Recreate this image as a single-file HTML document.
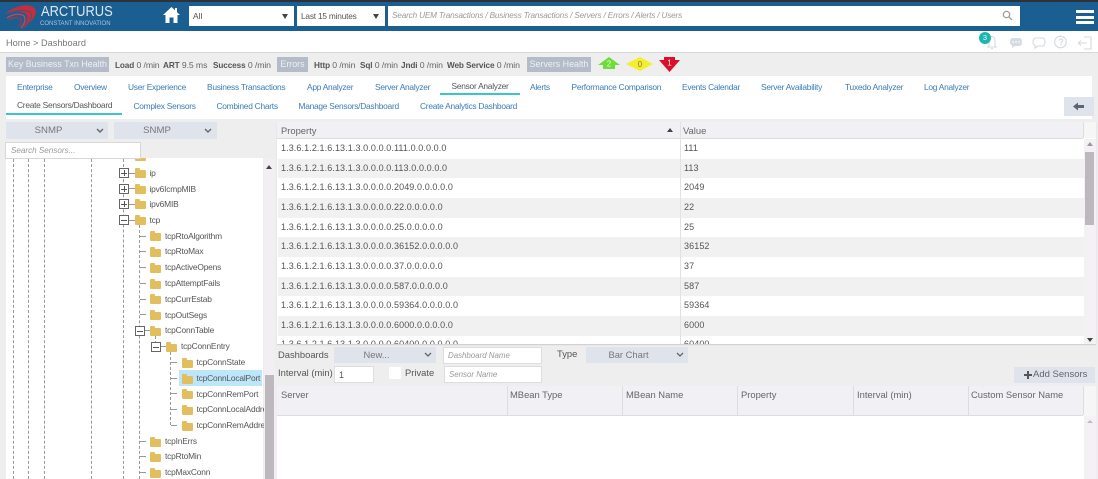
<!DOCTYPE html>
<html><head><meta charset="utf-8"><title>Dashboard</title>
<style>
html,body{margin:0;padding:0;background:#eee}
body{width:1098px;height:479px;overflow:hidden;position:relative;font-family:"Liberation Sans",sans-serif;font-size:9px;color:#666}
#w{position:absolute;left:0;top:0;width:1098px;height:479px;overflow:hidden;background:#eee;filter:blur(.3px)}
.a{position:absolute}
.t{position:absolute;white-space:nowrap;line-height:12px;height:12px}
.l{color:#3b7cb4;font-size:8.4px;letter-spacing:-.26px}
.d{color:#555;font-size:8.4px;letter-spacing:-.26px}
.h{font-size:8.7px;color:#666;letter-spacing:-.1px}
.h b{color:#555;font-size:8.2px}
.box{position:absolute;background:#b5bcc9;color:#eef0f3;font-size:8.9px;line-height:15px;height:15px;text-align:center;white-space:nowrap}
.sel{position:absolute;background:#dfe3ec;color:#777;font-size:9.6px;text-align:center;box-sizing:border-box;padding-right:17px}
.inp{position:absolute;background:#fff;border:1px solid #ddd;box-sizing:border-box;font-style:italic;color:#999;font-size:7.9px;white-space:nowrap}
.n{position:absolute;white-space:nowrap;font-size:8.4px;letter-spacing:-.18px;color:#555;line-height:12px}
.f{position:absolute;width:11px;height:8px;background:#e2bf5e;border-radius:1px}
.f:before{content:"";position:absolute;left:0;top:-2px;width:5px;height:3px;background:#e2bf5e;border-radius:1px 1px 0 0}
.b{position:absolute;width:8px;height:8px;border:1px solid #666;background:#fff}
.b:before{content:"";position:absolute;left:1px;top:3.5px;width:6px;height:1px;background:#555}
.p:after{content:"";position:absolute;left:3.5px;top:1px;width:1px;height:6px;background:#555}
.v{position:absolute;width:0;border-left:1px dashed #999}
.hl{position:absolute;height:0;width:6px;border-top:1px dashed #999}
.r{position:absolute;left:278px;width:806px;height:19.7px;line-height:19px;font-size:9px;letter-spacing:.1px;color:#555}
.r span{position:absolute;white-space:nowrap}
.r span:first-child{left:3px}
.r span:last-child{left:406px}
.g{background:#f1f1f1}
.c{position:absolute;white-space:nowrap;font-size:9.4px;color:#666;line-height:12px}
.s{position:absolute;width:1px;background:#dcdde2}
</style></head>
<body><div id="w">
<!-- header -->
<div class="a" style="left:0;top:0;width:1098px;height:2px;background:#2d3138"></div>
<div class="a" style="left:0;top:2px;width:1098px;height:29px;background:#1b5f92"></div>
<svg class="a" style="left:4px;top:4px" width="34" height="26" viewBox="0 0 34 26" fill="none">
<path d="M1 10C9 3 20 0 27 2C33 4 33 10 29 15C26 19 22 22 18 25C23 18 25 13 22 10C17 6 8 7 1 10Z" fill="#c92c3a"/>
<path d="M3 11C10 6 20 5 26 8C29 11 27 16 22 22" stroke="#1b5f92" stroke-width=".8"/>
<path d="M3 14C9 10 16 9 20 12C22 15 21 19 17 24" stroke="#d5424e" stroke-width="1.2"/>
<path d="M5 16C10 13 14 13 17 15C18 17 17 19 15 22" stroke="#b8303c" stroke-width="1.1"/>
</svg>
<div class="t" style="left:41px;top:4px;height:16px;line-height:16px;font-size:15.2px;color:#dfe8f0;transform:scaleX(.85);transform-origin:0 0">ARCTURUS</div>
<div class="t" style="left:40px;top:20px;height:8px;line-height:8px;font-size:6px;color:#a9c3d8">CONSTANT INNOVATION</div>
<svg class="a" style="left:162px;top:6px" width="19" height="18" viewBox="0 0 19 18"><path d="M9.5 1L1 9H3.5V17H7.5V11.5H11.5V17H15.5V9H18L15 6.2V2H13V4.3Z" fill="#fff"/></svg>
<div class="a" style="left:189px;top:6px;width:105px;height:20px;background:#fff"></div>
<div class="t" style="left:193px;top:10px;font-size:8.4px;color:#555">All</div>
<div class="a" style="left:282px;top:14px;width:0;height:0;border:3px solid transparent;border-top:5px solid #444;border-bottom:0"></div>
<div class="a" style="left:297px;top:6px;width:88px;height:20px;background:#fff"></div>
<div class="t" style="left:301px;top:10px;font-size:8.3px;letter-spacing:-.2px;color:#555">Last 15 minutes</div>
<div class="a" style="left:373px;top:14px;width:0;height:0;border:3px solid transparent;border-top:5px solid #444;border-bottom:0"></div>
<div class="a" style="left:388px;top:6px;width:632px;height:20px;background:#fff"></div>
<div class="t" style="left:392px;top:10px;font-size:8.2px;letter-spacing:-.16px;font-style:italic;color:#999">Search UEM Transactions / Business Transactions / Servers / Errors / Alerts / Users</div>
<svg class="a" style="left:1002px;top:10px" width="11" height="11" viewBox="0 0 11 11" fill="none" stroke="#999" stroke-width="1.2"><circle cx="4.5" cy="4.5" r="3.2"/><path d="M7 7L10 10"/></svg>
<div class="a" style="left:1076px;top:10px;width:18px;height:3px;background:#fff"></div>
<div class="a" style="left:1076px;top:16px;width:18px;height:3px;background:#fff"></div>
<div class="a" style="left:1076px;top:21px;width:18px;height:3px;background:#fff"></div>
<!-- breadcrumb -->
<div class="a" style="left:0;top:31px;width:1098px;height:21px;background:#fff;border-bottom:1px solid #d8d8d8"></div>
<div class="t" style="left:6px;top:37px;font-size:9.2px;color:#777">Home &gt; Dashboard</div>
<svg class="a" style="left:975px;top:30px" width="123" height="22" viewBox="0 0 123 22" fill="none" stroke="#d3dae0" stroke-width="1.1">
<path d="M12 17H22M14 17V11C14 8 15 6.500 17 6.500C19 6.500 20 8 20 11V17M16 18.500H18"/>
<path d="M38 8H44C46 8 47 9.500 47 12C47 14.500 46 16 44 16H40L37 18V15.500C36 15 35 14 35 12C35 9.500 36 8 38 8Z" fill="#d6dce2" stroke="none"/>
<circle cx="38" cy="12" r=".8" fill="#fff" stroke="none"/><circle cx="41" cy="12" r=".8" fill="#fff" stroke="none"/><circle cx="44" cy="12" r=".8" fill="#fff" stroke="none"/>
<path d="M61 8H67C69 8 70 9.500 70 12C70 14.500 69 16 67 16H63L60 18V15.500C59 15 58 14 58 12C58 9.500 59 8 61 8Z"/>
<circle cx="85.500" cy="12" r="5.800"/>
<path d="M109 7H116V19H109M111.500 13H103.500M106 10.500L103.500 13L106 15.500"/>
</svg>
<div class="a" style="left:979px;top:32px;width:12px;height:12px;border-radius:50%;background:#1fb5ad;color:#dff;font-size:7.500px;line-height:12px;text-align:center">3</div>
<div class="t" style="left:1058.300px;top:36px;font-size:9px;font-weight:bold;color:#d3dae0">?</div>
<!-- health -->
<div class="box" style="left:6px;top:57px;width:103px">Key Business Txn Health</div>
<div class="t h" style="left:115px;top:59px"><b>Load</b> 0 /min</div>
<div class="t h" style="left:163px;top:59px"><b>ART</b> 9.5 ms</div>
<div class="t h" style="left:213px;top:59px"><b>Success</b> 0 /min</div>
<div class="box" style="left:277px;top:57px;width:31px">Errors</div>
<div class="t h" style="left:314px;top:59px"><b>Http</b> 0 /min</div>
<div class="t h" style="left:360px;top:59px"><b>Sql</b> 0 /min</div>
<div class="t h" style="left:401px;top:59px"><b>Jndi</b> 0 /min</div>
<div class="t h" style="left:447px;top:59px"><b>Web Service</b> 0 /min</div>
<div class="box" style="left:527px;top:57px;width:64px">Servers Health</div>
<svg class="a" style="left:597px;top:57px" width="86" height="16" viewBox="0 0 86 16">
<path d="M1 8L12 0L23 8H18V12H6V8Z" fill="#6fdc3c"/>
<path d="M29 7L43 0L56 7L43 14Z" fill="#f5ee2a"/>
<path d="M67 0H78V3H83L72.500 15L62 3H67Z" fill="#d8102c"/>
<text x="12" y="9.500" font-size="8" fill="#e8ffd8" text-anchor="middle" font-family="Liberation Sans">2</text>
<text x="43" y="10" font-size="8" fill="#776" text-anchor="middle" font-family="Liberation Sans">0</text>
<text x="72.500" y="8.500" font-size="8" fill="#fdd" text-anchor="middle" font-family="Liberation Sans">1</text>
</svg>
<!-- tabs -->
<div class="a" style="left:6px;top:76px;width:1086px;height:43px;background:#fff"></div>
<div class="t l" style="left:17px;top:81px">Enterprise</div>
<div class="t l" style="left:74px;top:81px">Overview</div>
<div class="t l" style="left:128px;top:81px">User Experience</div>
<div class="t l" style="left:207px;top:81px">Business Transactions</div>
<div class="t l" style="left:307px;top:81px">App Analyzer</div>
<div class="t l" style="left:375px;top:81px">Server Analyzer</div>
<div class="t d" style="left:451.500px;top:80px">Sensor Analyzer</div>
<div class="t l" style="left:530px;top:81px">Alerts</div>
<div class="t l" style="left:571.500px;top:81px">Performance Comparison</div>
<div class="t l" style="left:682px;top:81px">Events Calendar</div>
<div class="t l" style="left:761px;top:81px">Server Availability</div>
<div class="t l" style="left:845px;top:81px">Tuxedo Analyzer</div>
<div class="t l" style="left:924px;top:81px">Log Analyzer</div>
<div class="a" style="left:440px;top:93px;width:80px;height:2px;background:#3cc4cc"></div>
<div class="t d" style="left:17px;top:99px">Create Sensors/Dashboard</div>
<div class="t l" style="left:133.500px;top:100px">Complex Sensors</div>
<div class="t l" style="left:216.500px;top:100px">Combined Charts</div>
<div class="t l" style="left:298.500px;top:100px">Manage Sensors/Dashboard</div>
<div class="t l" style="left:420px;top:100px">Create Analytics Dashboard</div>
<div class="a" style="left:6px;top:113px;width:116px;height:2px;background:#3cc4cc"></div>
<div class="a" style="left:1064px;top:97px;width:30px;height:19px;background:#dfe3ec"></div>
<svg class="a" style="left:1073px;top:102px" width="12" height="9" viewBox="0 0 12 9"><path d="M0 4.500L5 .5V3H11V6H5V8.500Z" fill="#5c6670"/></svg>
<!-- left panel -->
<div class="sel" style="left:6px;top:122px;width:102px;height:17px;line-height:17px">SNMP</div>
<div class="sel" style="left:114px;top:122px;width:103px;height:17px;line-height:17px">SNMP</div>
<svg class="a" style="left:96px;top:128px" width="10" height="6" fill="none" stroke="#666" stroke-width="1.400"><path d="M1 1L4 4L7 1"/></svg>
<svg class="a" style="left:204px;top:128px" width="10" height="6" fill="none" stroke="#666" stroke-width="1.400"><path d="M1 1L4 4L7 1"/></svg>
<div class="a" style="left:6px;top:158px;width:257px;height:321px;background:#fff"></div>
<div class="a" style="left:264px;top:159px;width:11px;height:320px;background:#f1eff2"></div>
<div class="a" style="left:265px;top:375px;width:9px;height:104px;background:#bdb8bd"></div>
<div class="a" style="left:266px;top:165px;width:0;height:0;border:3px solid transparent;border-bottom:4px solid #444;border-top:0"></div>
<!-- tree lines -->
<div class="v" style="left:13px;top:159px;height:320px"></div>
<div class="v" style="left:28px;top:159px;height:320px"></div>
<div class="v" style="left:44px;top:159px;height:320px"></div>
<div class="v" style="left:91px;top:159px;height:320px"></div>
<div class="v" style="left:123px;top:159px;height:320px"></div>
<div class="v" style="left:139px;top:225px;height:254px"></div>
<div class="v" style="left:155px;top:336px;height:8px"></div>
<div class="v" style="left:170px;top:352px;height:73px"></div>
<!-- tree rows -->
<div class="f" style="left:135px;height:3px;top:158px"></div>
<div class="inp" style="left:5px;top:142px;width:136px;height:17px;line-height:15px;padding-left:5px;font-size:8.100px;border-color:#d8d8d8">Search Sensors...</div>
<div class="b p" style="left:119px;top:168px"></div><div class="hl" style="left:129px;top:173px"></div><div class="f" style="left:135px;top:170px"></div><div class="n" style="left:149.500px;top:167px">ip</div>
<div class="b p" style="left:119px;top:184px"></div><div class="hl" style="left:129px;top:188px"></div><div class="f" style="left:135px;top:186px"></div><div class="n" style="left:149.500px;top:182.500px">ipv6IcmpMIB</div>
<div class="b p" style="left:119px;top:199px"></div><div class="hl" style="left:129px;top:204px"></div><div class="f" style="left:135px;top:201px"></div><div class="n" style="left:149.500px;top:198px">ipv6MIB</div>
<div class="b" style="left:119px;top:215px"></div><div class="hl" style="left:129px;top:220px"></div><div class="f" style="left:135px;top:217px"></div><div class="n" style="left:149.500px;top:214px">tcp</div>
<div class="hl" style="left:140px;top:236px"></div><div class="f" style="left:150px;top:233px"></div><div class="n" style="left:165px;top:229.500px">tcpRtoAlgorithm</div>
<div class="hl" style="left:140px;top:251px"></div><div class="f" style="left:150px;top:249px"></div><div class="n" style="left:165px;top:245px">tcpRtoMax</div>
<div class="hl" style="left:140px;top:267px"></div><div class="f" style="left:150px;top:265px"></div><div class="n" style="left:165px;top:261px">tcpActiveOpens</div>
<div class="hl" style="left:140px;top:283px"></div><div class="f" style="left:150px;top:281px"></div><div class="n" style="left:165px;top:277px">tcpAttemptFails</div>
<div class="hl" style="left:140px;top:299px"></div><div class="f" style="left:150px;top:296px"></div><div class="n" style="left:165px;top:293px">tcpCurrEstab</div>
<div class="hl" style="left:140px;top:314px"></div><div class="f" style="left:150px;top:312px"></div><div class="n" style="left:165px;top:308.500px">tcpOutSegs</div>
<div class="b" style="left:135px;top:326px"></div><div class="hl" style="left:145px;top:330px"></div><div class="f" style="left:150px;top:328px"></div><div class="n" style="left:165px;top:324px">tcpConnTable</div>
<div class="b" style="left:151px;top:342px"></div><div class="hl" style="left:161px;top:346px"></div><div class="f" style="left:166px;top:344px"></div><div class="n" style="left:181px;top:340px">tcpConnEntry</div>
<div class="hl" style="left:171px;top:362px"></div><div class="f" style="left:182px;top:360px"></div><div class="n" style="left:196.500px;top:356px">tcpConnState</div>
<div class="a" style="left:179px;top:370px;width:83px;height:16px;background:#bde6fa"></div>
<div class="hl" style="left:171px;top:378px"></div><div class="f" style="left:182px;top:375.500px"></div><div class="n" style="left:196.500px;top:371.500px">tcpConnLocalPort</div>
<div class="hl" style="left:171px;top:393px"></div><div class="f" style="left:182px;top:391px"></div><div class="n" style="left:196.500px;top:387.500px">tcpConnRemPort</div>
<div class="hl" style="left:171px;top:409px"></div><div class="f" style="left:182px;top:407px"></div><div class="n" style="left:196.500px;top:403px;width:67px;overflow:hidden">tcpConnLocalAddress</div>
<div class="hl" style="left:171px;top:425px"></div><div class="f" style="left:182px;top:423px"></div><div class="n" style="left:196.500px;top:419px;width:67px;overflow:hidden">tcpConnRemAddress</div>
<div class="hl" style="left:140px;top:441px"></div><div class="f" style="left:150px;top:438.500px"></div><div class="n" style="left:165px;top:434.500px">tcpInErrs</div>
<div class="hl" style="left:140px;top:456px"></div><div class="f" style="left:150px;top:454px"></div><div class="n" style="left:165px;top:450px">tcpRtoMin</div>
<div class="hl" style="left:140px;top:472px"></div><div class="f" style="left:150px;top:470px"></div><div class="n" style="left:165px;top:466px">tcpMaxConn</div>
<!-- property table -->
<div class="a" style="left:277px;top:122px;width:819px;height:222px;background:#fff;box-shadow:0 1px 1px #ccc;overflow:hidden">
<div class="a" style="left:0;top:0;width:806px;height:16px;background:#f1f1f5;border-bottom:1px solid #ddd"></div>
<div class="a" style="left:806px;top:0;width:13px;height:16px;background:#f6f6f6;border-left:1px solid #ddd;box-sizing:border-box"></div>
<div class="c" style="left:4px;top:3px">Property</div>
<div class="c" style="left:406px;top:3px">Value</div>
<div class="a" style="left:390px;top:6px;width:0;height:0;border:3px solid transparent;border-bottom:4px solid #444;border-top:0"></div>
<div class="a" style="left:807px;top:17px;width:12px;height:205px;background:#f4f1f4"></div>
<div class="a" style="left:808px;top:30px;width:9px;height:73px;background:#bdb8bd"></div>
<div class="a" style="left:810px;top:20px;width:0;height:0;border:3px solid transparent;border-bottom:4px solid #999;border-top:0"></div>
<div class="a" style="left:810px;top:216px;width:0;height:0;border:3px solid transparent;border-top:4px solid #444;border-bottom:0"></div>
</div>
<div class="r" style="top:139px"><span>1.3.6.1.2.1.6.13.1.3.0.0.0.0.111.0.0.0.0.0</span><span>111</span></div>
<div class="r g" style="top:158.500px"><span>1.3.6.1.2.1.6.13.1.3.0.0.0.0.113.0.0.0.0.0</span><span>113</span></div>
<div class="r" style="top:178px"><span>1.3.6.1.2.1.6.13.1.3.0.0.0.0.2049.0.0.0.0.0</span><span>2049</span></div>
<div class="r g" style="top:198px"><span>1.3.6.1.2.1.6.13.1.3.0.0.0.0.22.0.0.0.0.0</span><span>22</span></div>
<div class="r" style="top:217.500px"><span>1.3.6.1.2.1.6.13.1.3.0.0.0.0.25.0.0.0.0.0</span><span>25</span></div>
<div class="r g" style="top:237px"><span>1.3.6.1.2.1.6.13.1.3.0.0.0.0.36152.0.0.0.0.0</span><span>36152</span></div>
<div class="r" style="top:257px"><span>1.3.6.1.2.1.6.13.1.3.0.0.0.0.37.0.0.0.0.0</span><span>37</span></div>
<div class="r g" style="top:276.500px"><span>1.3.6.1.2.1.6.13.1.3.0.0.0.0.587.0.0.0.0.0</span><span>587</span></div>
<div class="r" style="top:296px"><span>1.3.6.1.2.1.6.13.1.3.0.0.0.0.59364.0.0.0.0.0</span><span>59364</span></div>
<div class="r g" style="top:316px"><span>1.3.6.1.2.1.6.13.1.3.0.0.0.0.6000.0.0.0.0.0</span><span>6000</span></div>
<div class="a" style="left:278px;top:335px;width:806px;height:9px;overflow:hidden"><div class="r" style="left:0;top:0"><span>1.3.6.1.2.1.6.13.1.3.0.0.0.0.60400.0.0.0.0.0</span><span>60400</span></div></div>
<div class="s" style="left:680px;top:122px;height:222px;background:#e2e2e2"></div>
<!-- form -->
<div class="c" style="left:278px;top:349px;color:#555">Dashboards</div>
<div class="sel" style="left:334px;top:347px;width:102px;height:16px;line-height:16px;font-size:9.400px">New...</div>
<svg class="a" style="left:424px;top:352px" width="10" height="6" fill="none" stroke="#666" stroke-width="1.300"><path d="M1 1L4 4L7 1"/></svg>
<div class="inp" style="left:443px;top:347px;width:99px;height:17px;line-height:15px;padding-left:4px">Dashboard Name</div>
<div class="c" style="left:557px;top:348px;color:#555">Type</div>
<div class="sel" style="left:586px;top:347px;width:102px;height:16px;line-height:16px;font-size:9.400px">Bar Chart</div>
<svg class="a" style="left:676px;top:352px" width="10" height="6" fill="none" stroke="#666" stroke-width="1.300"><path d="M1 1L4 4L7 1"/></svg>
<div class="c" style="left:278px;top:367px;color:#555">Interval (min)</div>
<div class="inp" style="left:334px;top:366px;width:40px;height:17px;line-height:16px;padding-left:4px;font-style:normal;color:#555;font-size:9px">1</div>
<div class="a" style="left:389px;top:367px;width:12px;height:12px;background:#fff;border-radius:1px"></div>
<div class="c" style="left:405px;top:367px;color:#555">Private</div>
<div class="inp" style="left:444px;top:366px;width:98px;height:17px;line-height:16px;padding-left:4px">Sensor Name</div>
<div class="a" style="left:1014px;top:367px;width:81px;height:16px;background:#dfe3ec"></div>
<div class="c" style="left:1033px;top:369px;font-size:9.500px;color:#666">Add Sensors</div>
<svg class="a" style="left:1024px;top:371px" width="8" height="8"><path d="M3 0H5V3H8V5H5V8H3V5H0V3H3Z" fill="#555"/></svg>
<!-- sensors table -->
<div class="a" style="left:277px;top:386px;width:819px;height:93px;background:#fff"></div>
<div class="a" style="left:277px;top:386px;width:806px;height:30px;background:#f1f1f5;border-bottom:1px solid #ddd;box-sizing:border-box"></div>
<div class="a" style="left:1084px;top:386px;width:12px;height:30px;background:#f6f6f6"></div>
<div class="a" style="left:1084px;top:416px;width:12px;height:63px;background:#f4f1f4"></div>
<div class="a" style="left:1087px;top:420px;width:0;height:0;border:3px solid transparent;border-bottom:3px solid #bbb;border-top:0"></div>
<div class="s" style="left:507px;top:386px;height:29px"></div>
<div class="s" style="left:622px;top:386px;height:29px"></div>
<div class="s" style="left:737px;top:386px;height:29px"></div>
<div class="s" style="left:853px;top:386px;height:29px"></div>
<div class="s" style="left:968px;top:386px;height:29px"></div>
<div class="s" style="left:1083px;top:386px;height:29px"></div>
<div class="c" style="left:281px;top:389px">Server</div>
<div class="c" style="left:510px;top:389px">MBean Type</div>
<div class="c" style="left:626px;top:389px">MBean Name</div>
<div class="c" style="left:741px;top:389px">Property</div>
<div class="c" style="left:857px;top:389px">Interval (min)</div>
<div class="c" style="left:971px;top:389px">Custom Sensor Name</div>
</div></body></html>
